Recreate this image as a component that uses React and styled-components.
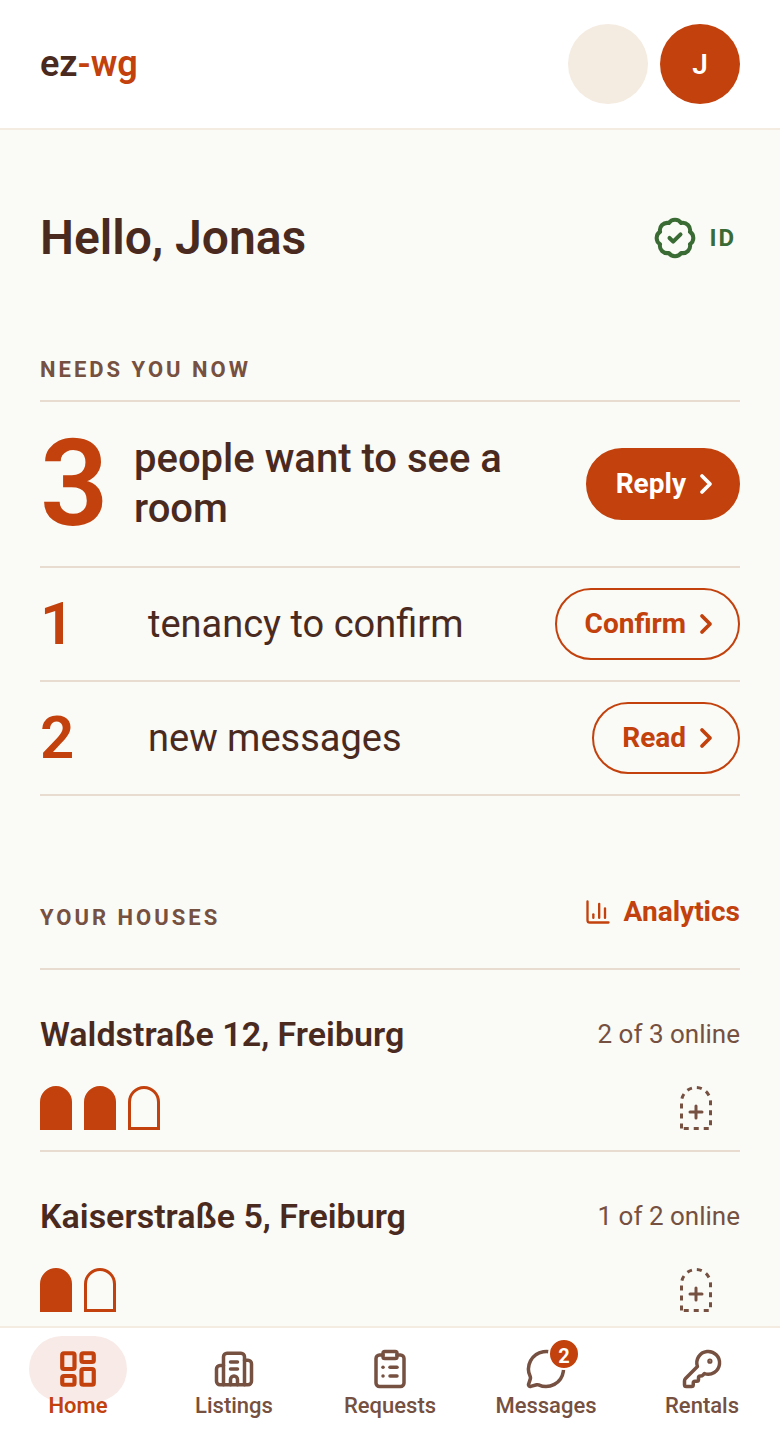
import React from "react";
import styled, { createGlobalStyle, ThemeProvider } from "styled-components";
import {
  BadgeCheck,
  Building2,
  ChartColumn,
  ChevronRight,
  ClipboardList,
  KeyRound,
  LayoutDashboard,
  MessageCircle
} from "lucide-react";

const theme = {
  main: "#c2410c",
  text: "#4a2a1e",
  muted: "#765040",
  background: "#fafaf6",
  surface: "#ffffff",
  line: "#e8dbd0",
  soft: "#f4ebe1",
  active: "#f8eae6",
  verified: "#3b6b35"
};

const GlobalStyle = createGlobalStyle`
  * {
    box-sizing: border-box;
  }

  body {
    margin: 0;
    background: ${theme.background};
    color: ${theme.text};
    font-family: Roboto, "Liberation Sans", sans-serif;
  }

  h1, h2, h3, p, ul {
    margin: 0;
    padding: 0;
  }

  a {
    color: inherit;
    text-decoration: none;
  }

  svg {
    flex: none;
    display: block;
  }
`;

const Page = styled.div`
  height: 100vh;
  display: flex;
  flex-direction: column;
`;

const Header = styled.header`
  flex: none;
  display: flex;
  align-items: center;
  justify-content: space-between;
  padding: 24px 40px;
  background: ${props => props.theme.surface};
  border-bottom: 2px solid ${props => props.theme.soft};
`;

const Logo = styled.a`
  font-size: 36px;
  line-height: 40px;
  font-weight: 600;
`;

const LogoAccent = styled.span`
  color: ${props => props.theme.main};
`;

const HeaderActions = styled.div`
  display: flex;
  gap: 12px;
`;

const RoundButton = styled.button`
  width: 80px;
  height: 80px;
  padding: 0;
  border: 0;
  border-radius: 50%;
  background: ${props => (props.$filled ? props.theme.main : props.theme.soft)};
  color: ${props => props.theme.surface};
  font-family: inherit;
  font-size: 28px;
  font-weight: 600;
`;

const Content = styled.main`
  flex: 1;
  min-height: 0;
  overflow: hidden;
  padding: 80px 40px 0;
`;

const Greeting = styled.div`
  display: flex;
  align-items: center;
  justify-content: space-between;
`;

const Title = styled.h1`
  font-size: 48px;
  line-height: 56px;
  font-weight: 600;
`;

const Verified = styled.span`
  display: flex;
  align-items: center;
  gap: 12px;
  padding-right: 4px;
  color: ${props => props.theme.verified};
  font-size: 24px;
  line-height: 32px;
  font-weight: 700;
  letter-spacing: 2px;
`;

const Section = styled.section`
  margin-top: ${props => props.$gap}px;
`;

const SectionHeader = styled.div`
  display: flex;
  align-items: center;
  justify-content: space-between;
  padding-bottom: ${props => (props.$tall ? 36 : 16)}px;
  border-bottom: 2px solid ${props => props.theme.line};
`;

const SectionTitle = styled.h2`
  padding-top: ${props => (props.$low ? 12 : 0)}px;
  color: ${props => props.theme.muted};
  font-size: 22px;
  line-height: 28px;
  font-weight: 700;
  letter-spacing: 3px;
  text-transform: uppercase;
`;

const AnalyticsLink = styled.a`
  display: flex;
  align-items: center;
  gap: 12px;
  color: ${props => props.theme.main};
  font-size: 28px;
  line-height: 32px;
  font-weight: 700;
`;

const List = styled.ul`
  list-style: none;
`;

const Task = styled.li`
  min-height: ${props => (props.$lead ? 166 : 114)}px;
  display: flex;
  align-items: center;
  gap: ${props => (props.$lead ? 24 : 28)}px;
  border-bottom: 2px solid ${props => props.theme.line};
`;

const Count = styled.span`
  min-width: ${props => (props.$lead ? 70 : 80)}px;
  color: ${props => props.theme.main};
  font-size: ${props => (props.$lead ? 120 : 60)}px;
  line-height: ${props => (props.$lead ? 120 : 60)}px;
  font-weight: 600;
`;

const TaskText = styled.p`
  flex: 1;
  font-size: ${props => (props.$lead ? 40 : 38)}px;
  line-height: 50px;
  font-weight: ${props => (props.$lead ? 500 : 400)};
`;

const Action = styled.button`
  height: 72px;
  display: flex;
  align-items: center;
  gap: 4px;
  padding: 0 16px 0 28px;
  border: 2px solid ${props => props.theme.main};
  border-radius: 36px;
  background: ${props => (props.$filled ? props.theme.main : "transparent")};
  color: ${props => (props.$filled ? props.theme.surface : props.theme.main)};
  font-family: inherit;
  font-size: 28px;
  line-height: 32px;
  font-weight: 700;
`;

const House = styled.li`
  padding: 42px 0 20px;
  border-bottom: 2px solid ${props => props.theme.line};
`;

const HouseRow = styled.div`
  display: flex;
  align-items: center;
  justify-content: space-between;
`;

const HouseName = styled.h3`
  font-size: 34px;
  line-height: 44px;
  font-weight: 600;
`;

const Online = styled.p`
  color: ${props => props.theme.muted};
  font-size: 26px;
  line-height: 44px;
`;

const Rooms = styled.div`
  display: flex;
  justify-content: space-between;
  margin-top: 30px;
`;

const Doors = styled.div`
  display: flex;
  gap: 12px;
`;

const AddRoom = styled.button`
  display: flex;
  margin-right: 28px;
  padding: 0;
  border: 0;
  background: none;
  color: ${props => props.theme.muted};
`;

const TabBar = styled.nav`
  flex: none;
  display: grid;
  grid-template-columns: repeat(5, 1fr);
  padding: 8px 0 20px;
  background: ${props => props.theme.surface};
  border-top: 2px solid ${props => props.theme.soft};
`;

const Tab = styled.a`
  display: flex;
  flex-direction: column;
  align-items: center;
  color: ${props => (props.$active ? props.theme.main : props.theme.muted)};
  font-size: 22px;
  line-height: 28px;
  font-weight: ${props => (props.$active ? 600 : 500)};
`;

const TabIcon = styled.span`
  position: relative;
  width: 98px;
  height: 66px;
  display: flex;
  align-items: center;
  justify-content: center;
  margin-bottom: -10px;
  border-radius: 33px;
  background: ${props => (props.$active ? props.theme.active : "transparent")};
`;

const TabLabel = styled.span`
  position: relative;
`;

const Badge = styled.span`
  position: absolute;
  top: 2px;
  right: 15px;
  width: 32px;
  height: 32px;
  border: 2px solid ${props => props.theme.surface};
  border-radius: 50%;
  background: ${props => props.theme.main};
  color: ${props => props.theme.surface};
  font-size: 20px;
  line-height: 32px;
  font-weight: 700;
  text-align: center;
`;

const tasks = [
  { count: 3, text: "people want to see a room", action: "Reply", lead: true },
  { count: 1, text: "tenancy to confirm", action: "Confirm" },
  { count: 2, text: "new messages", action: "Read" }
];

const houses = [
  { name: "Waldstraße 12, Freiburg", online: 2, rooms: 3 },
  { name: "Kaiserstraße 5, Freiburg", online: 1, rooms: 2 }
];

const tabs = [
  { label: "Home", icon: LayoutDashboard, active: true },
  { label: "Listings", icon: Building2 },
  { label: "Requests", icon: ClipboardList },
  { label: "Messages", icon: MessageCircle, badge: 2 },
  { label: "Rentals", icon: KeyRound }
];

const doorPath = "M1.5 42.5V16a14.5 14.5 0 0 1 29 0v26.5z";

function Door({ filled }) {
  return (
    <svg width="32" height="44" viewBox="0 0 32 44" aria-hidden="true">
      <path
        d={doorPath}
        fill={filled ? theme.main : "none"}
        stroke={theme.main}
        strokeWidth="3"
      />
    </svg>
  );
}

function DashedDoor() {
  return (
    <svg
      width="32"
      height="44"
      viewBox="0 0 32 44"
      fill="none"
      stroke="currentColor"
      strokeWidth="3"
      aria-hidden="true"
    >
      <path d={doorPath} strokeDasharray="5 5" />
      <path d="M16 20v12M10 26h12" strokeLinecap="round" />
    </svg>
  );
}

function App() {
  return (
    <ThemeProvider theme={theme}>
      <GlobalStyle />
      <Page>
        <Header>
          <Logo href="#home">
            ez<LogoAccent>-wg</LogoAccent>
          </Logo>
          <HeaderActions>
            <RoundButton aria-label="Notifications" />
            <RoundButton $filled>J</RoundButton>
          </HeaderActions>
        </Header>

        <Content>
          <Greeting>
            <Title>Hello, Jonas</Title>
            <Verified>
              <BadgeCheck size={44} strokeWidth={2.2} />
              ID
            </Verified>
          </Greeting>

          <Section $gap={90}>
            <SectionHeader>
              <SectionTitle>Needs you now</SectionTitle>
            </SectionHeader>
            <List>
              {tasks.map(task => (
                <Task key={task.action} $lead={task.lead}>
                  <Count $lead={task.lead}>{task.count}</Count>
                  <TaskText $lead={task.lead}>{task.text}</TaskText>
                  <Action $filled={task.lead}>
                    {task.action}
                    <ChevronRight size={32} strokeWidth={2.8} />
                  </Action>
                </Task>
              ))}
            </List>
          </Section>

          <Section $gap={96}>
            <SectionHeader $tall>
              <SectionTitle $low>Your houses</SectionTitle>
              <AnalyticsLink href="#analytics">
                <ChartColumn size={28} />
                Analytics
              </AnalyticsLink>
            </SectionHeader>
            <List>
              {houses.map(house => (
                <House key={house.name}>
                  <HouseRow>
                    <HouseName>{house.name}</HouseName>
                    <Online>
                      {house.online} of {house.rooms} online
                    </Online>
                  </HouseRow>
                  <Rooms>
                    <Doors>
                      {Array.from({ length: house.rooms }, (_, i) => (
                        <Door key={i} filled={i < house.online} />
                      ))}
                    </Doors>
                    <AddRoom aria-label="Add room">
                      <DashedDoor />
                    </AddRoom>
                  </Rooms>
                </House>
              ))}
            </List>
          </Section>
        </Content>

        <TabBar>
          {tabs.map(({ label, icon: Icon, active, badge }) => (
            <Tab key={label} href={`#${label.toLowerCase()}`} $active={active}>
              <TabIcon $active={active}>
                <Icon size={42} strokeWidth={active ? 2.4 : 2} />
                {badge && <Badge>{badge}</Badge>}
              </TabIcon>
              <TabLabel>{label}</TabLabel>
            </Tab>
          ))}
        </TabBar>
      </Page>
    </ThemeProvider>
  );
}

export default App;
